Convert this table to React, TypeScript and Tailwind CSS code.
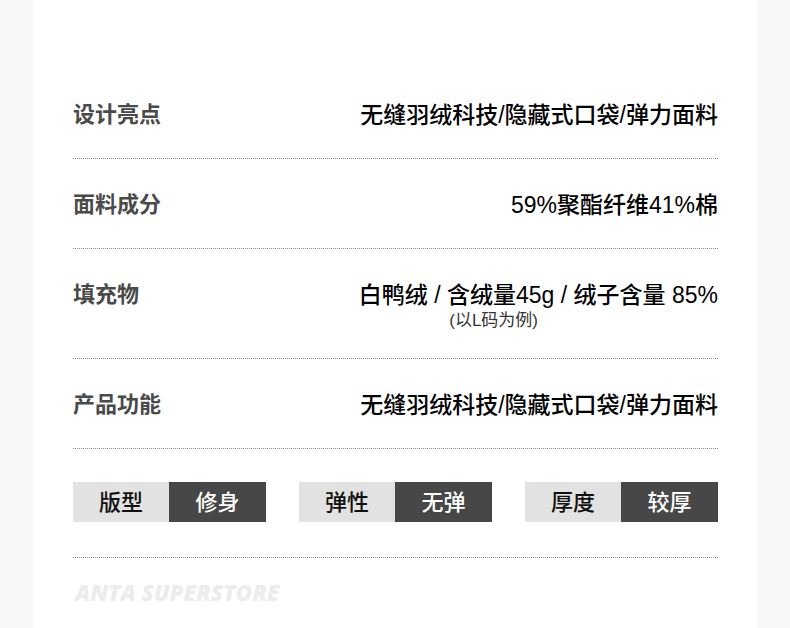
const font = { fontFamily: '"Liberation Sans", "Noto Sans CJK SC", sans-serif' };

function Row({ label, value, sub }: { label: string; value: string; sub?: string }) {
  return (
    <div className="border-b border-dotted border-[#8a8a8a] pt-[31px] pb-[28px] first:pt-0">
      <div className="flex justify-between items-start">
        <span className="text-[22px] leading-[30px] font-bold text-[#4a4a4a]">{label}</span>
        <div className="flex flex-col items-end">
          <span className="text-[23px] leading-[30px] font-medium text-black">{value}</span>
          {sub && (
            <span className="text-[17px] leading-[22px] text-[#333] pr-[180px] mb-[-2px]">{sub}</span>
          )}
        </div>
      </div>
    </div>
  );
}

function Tag({ name, val }: { name: string; val: string }) {
  return (
    <div className="flex w-[193px] h-[40px] text-[22px] font-medium">
      <div className="w-[96px] bg-[#e2e2e2] text-[#111] flex items-center justify-center">{name}</div>
      <div className="flex-1 bg-[#474747] text-white flex items-center justify-center">{val}</div>
    </div>
  );
}

export default function App() {
  return (
    <div className="w-[790px] h-[628px] bg-[#f8f8f8] overflow-hidden" style={font}>
      <div className="ml-[33px] w-[724px] h-full bg-white pl-[40px] pr-[39px] pt-[100px]">
        <Row label="设计亮点" value="无缝羽绒科技/隐藏式口袋/弹力面料" />
        <Row label="面料成分" value="59%聚酯纤维41%棉" />
        <Row label="填充物" value="白鸭绒 / 含绒量45g / 绒子含量 85%" sub="(以L码为例)" />
        <Row label="产品功能" value="无缝羽绒科技/隐藏式口袋/弹力面料" />
        <div className="border-b border-dotted border-[#8a8a8a] pt-[33px] pb-[35px] flex justify-between">
          <Tag name="版型" val="修身" />
          <Tag name="弹性" val="无弹" />
          <Tag name="厚度" val="较厚" />
        </div>
        <div
          className="pt-[21px] pl-[2px] text-[22.5px] leading-[28px] font-extrabold italic text-[#ececec]"
          style={{ fontFamily: '"Open Sans", "Liberation Sans", sans-serif' }}
        >
          ANTA SUPERSTORE
        </div>
      </div>
    </div>
  );
}
